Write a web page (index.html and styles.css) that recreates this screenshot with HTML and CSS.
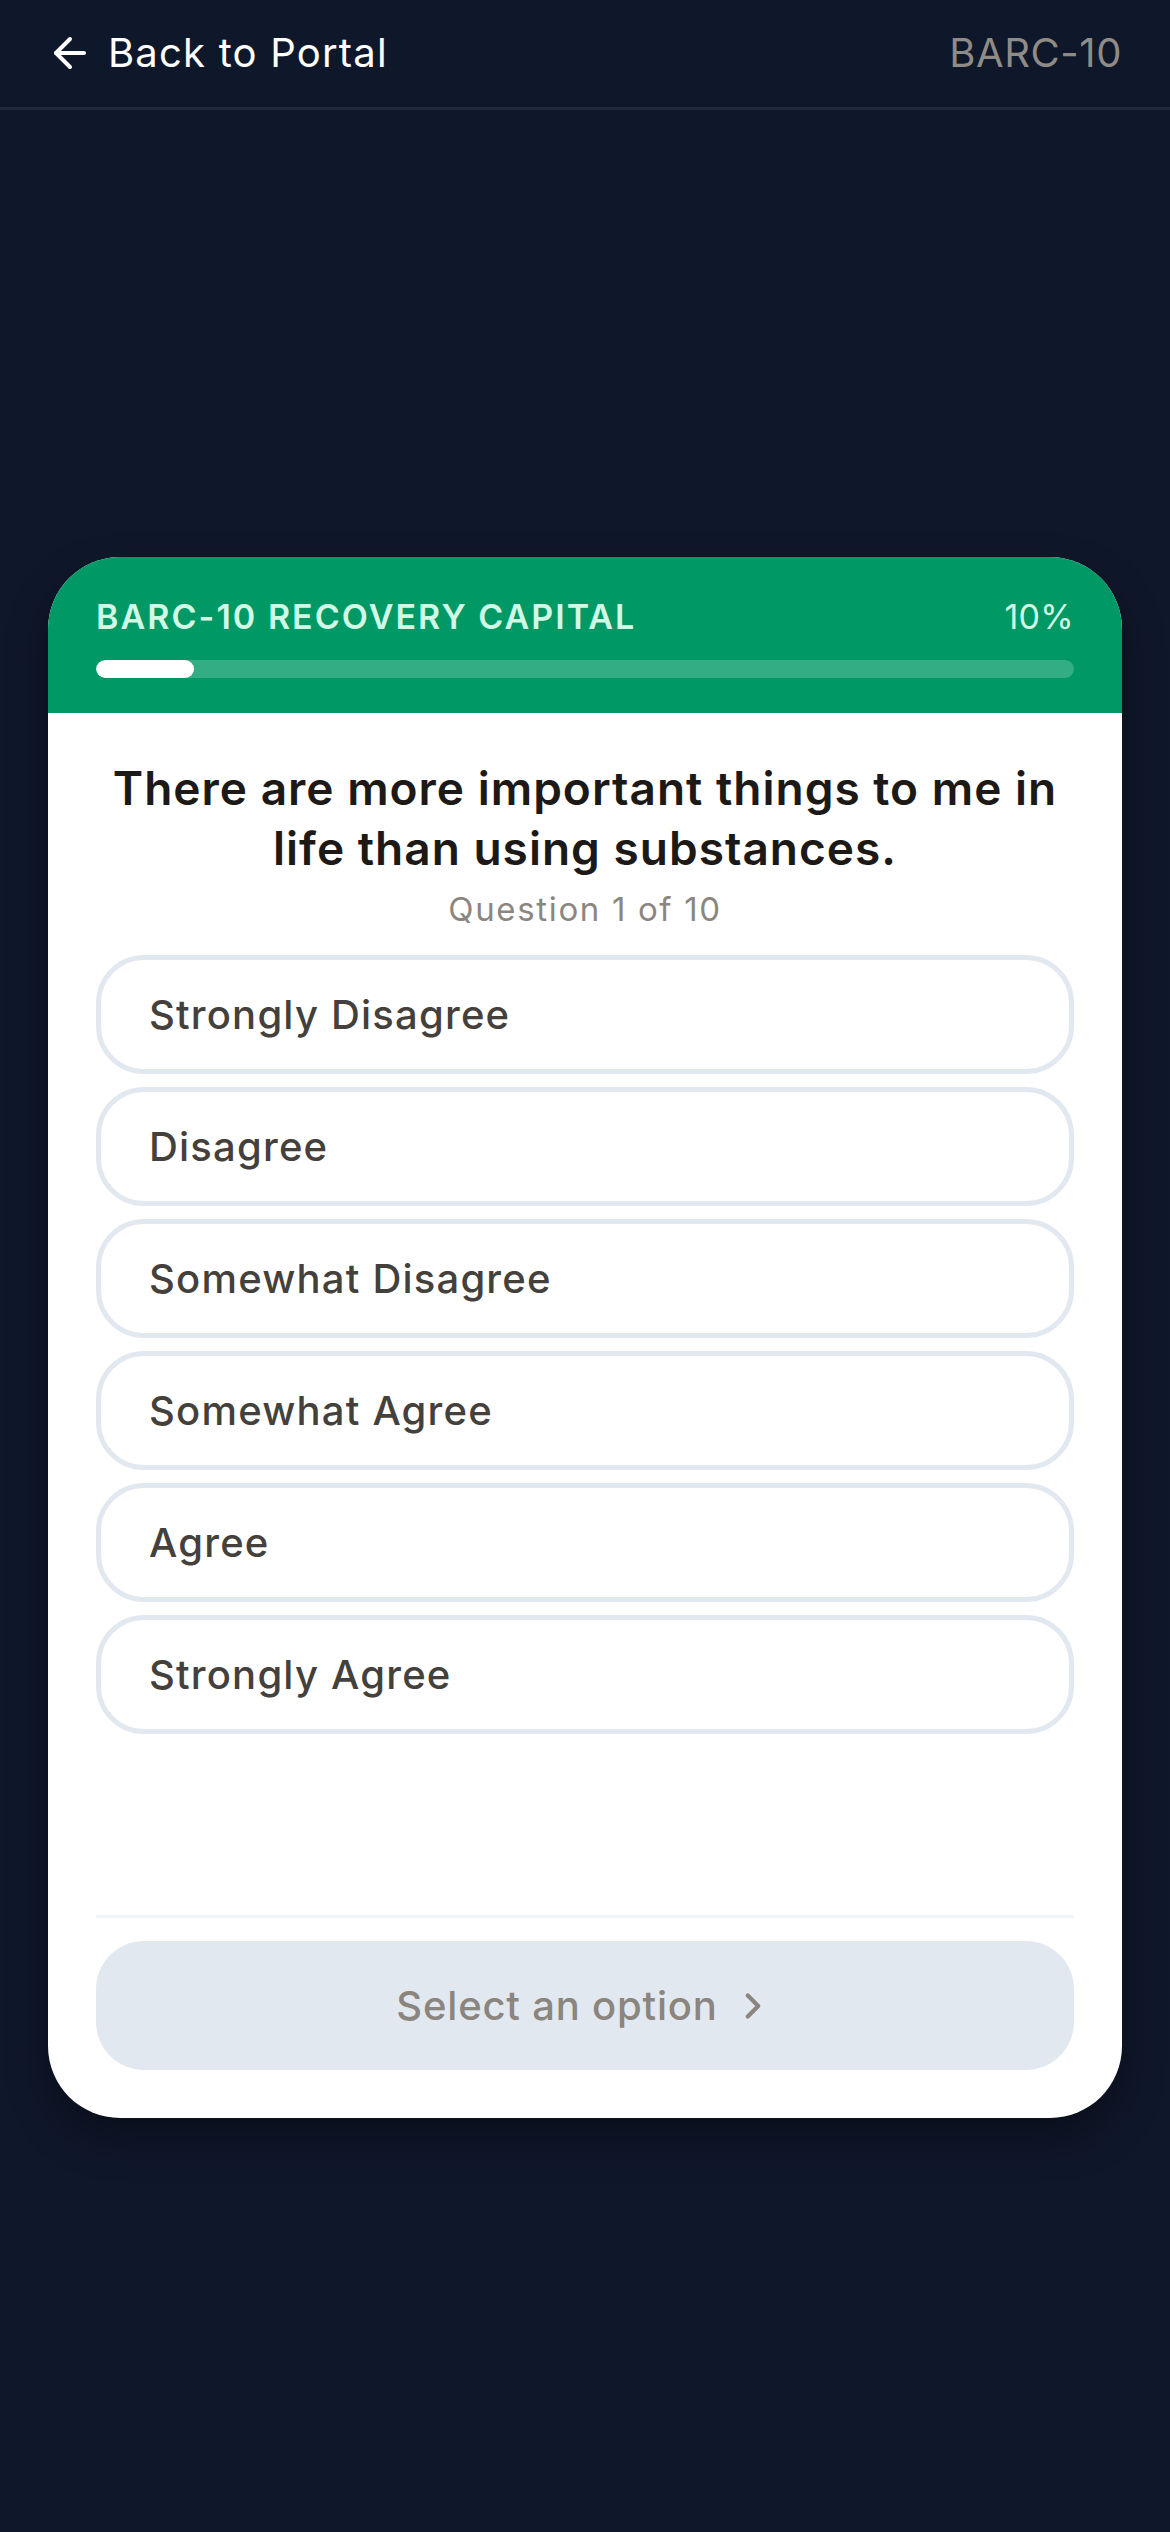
FILE: index.html
```html
<!DOCTYPE html>
<html lang="en">
<head>
<meta charset="utf-8">
<title>BARC-10</title>
<link rel="stylesheet" href="styles.css">
</head>
<body>
<header class="topbar">
  <a class="back" href="#">
    <svg class="back-icon" viewBox="0 0 24 24" fill="none" stroke="currentColor" stroke-width="2" stroke-linecap="round" stroke-linejoin="round"><path d="m12 19-7-7 7-7"/><path d="M19 12H5"/></svg>
    <span>Back to Portal</span>
  </a>
  <span class="code">BARC-10</span>
</header>
<main class="main">
  <section class="card">
    <div class="card-head">
      <div class="head-row">
        <span class="head-title">BARC-10 RECOVERY CAPITAL</span>
        <span class="head-pct">10%</span>
      </div>
      <div class="track"><div class="fill" style="width:10%"></div></div>
    </div>
    <div class="card-body">
      <h1 class="question">There are more important things to me in life than using substances.</h1>
      <p class="counter">Question 1 of 10</p>
      <div class="options">
        <button class="option">Strongly Disagree</button>
        <button class="option">Disagree</button>
        <button class="option">Somewhat Disagree</button>
        <button class="option">Somewhat Agree</button>
        <button class="option">Agree</button>
        <button class="option">Strongly Agree</button>
      </div>
    </div>
    <div class="card-foot">
      <button class="next" disabled>
        <span>Select an option</span>
        <svg class="chev" viewBox="0 0 24 24" fill="none" stroke="currentColor" stroke-width="2.4" stroke-linecap="round" stroke-linejoin="round"><path d="m9 18 6-6-6-6"/></svg>
      </button>
    </div>
  </section>
</main>
</body>
</html>
```
FILE: styles.css
```css
* { box-sizing: border-box; }
html, body { margin: 0; padding: 0; }
body {
  background: #0f172a;
  font-family: Inter, "Liberation Sans", sans-serif;
  min-height: 100vh;
  letter-spacing: 0.02em;
}
.topbar {
  height: 110px;
  border-bottom: 3px solid #1e293b;
  display: flex;
  align-items: center;
  justify-content: space-between;
  padding: 0 48px 2px 46px;
}
.back {
  display: flex;
  align-items: center;
  gap: 14px;
  color: #ffffff;
  text-decoration: none;
  font-size: 40px;
  line-height: 48px;
  letter-spacing: 0.03em;
}
.back-icon { width: 48px; height: 48px; }
.code {
  color: #8f8b86;
  font-size: 40px;
  line-height: 48px;
  letter-spacing: 0.015em;
}
.main {
  padding: 447px 48px 0;
}
.card {
  background: #ffffff;
  border-radius: 72px;
  overflow: hidden;
  min-height: 1561px;
  display: flex;
  flex-direction: column;
  box-shadow: 0 20px 40px rgba(0,0,0,0.35);
}
.card-head {
  background: #009966;
  padding: 36px 48px 35px;
}
.head-row {
  display: flex;
  justify-content: space-between;
  align-items: center;
  height: 48px;
  margin-bottom: 19px;
  color: #d1fae5;
  font-size: 34px;
  line-height: 48px;
}
.head-title { font-weight: 600; letter-spacing: 0.06em; }
.head-pct { font-weight: 400; }
.track {
  height: 18px;
  border-radius: 9px;
  background: rgba(255,255,255,0.2);
  overflow: hidden;
}
.fill { height: 100%; background: #ffffff; border-radius: 9px; }
.card-body {
  flex: 1;
  padding: 45px 48px 0;
}
.question {
  margin: 0;
  text-align: center;
  font-size: 46px;
  line-height: 60px;
  font-weight: 600;
  color: #1c1917;
  letter-spacing: 0.022em;
}
.counter {
  margin: 9px 0 0;
  text-align: center;
  font-size: 33px;
  line-height: 44px;
  color: #8c8680;
  letter-spacing: 0.05em;
}
.options {
  margin-top: 24px;
  display: flex;
  flex-direction: column;
  gap: 13px;
}
.option {
  height: 119px;
  border: 5px solid #e2e8f0;
  border-radius: 48px;
  background: #ffffff;
  text-align: left;
  padding: 0 48px;
  font-family: inherit;
  font-size: 40px;
  line-height: 48px;
  font-weight: 500;
  color: #44403c;
  letter-spacing: 0.03em;
}
.card-foot {
  margin: 0 48px;
  border-top: 3px solid #f1f5f9;
  padding: 23px 0 48px;
}
.next {
  width: 100%;
  height: 129px;
  border: none;
  border-radius: 48px;
  background: #e2e8f0;
  display: flex;
  align-items: center;
  justify-content: center;
  gap: 14px;
  font-family: inherit;
  font-size: 40px;
  line-height: 48px;
  font-weight: 500;
  color: #8a857e;
  letter-spacing: 0.02em;
  padding: 0;
}
.chev { width: 42px; height: 42px; }
```
